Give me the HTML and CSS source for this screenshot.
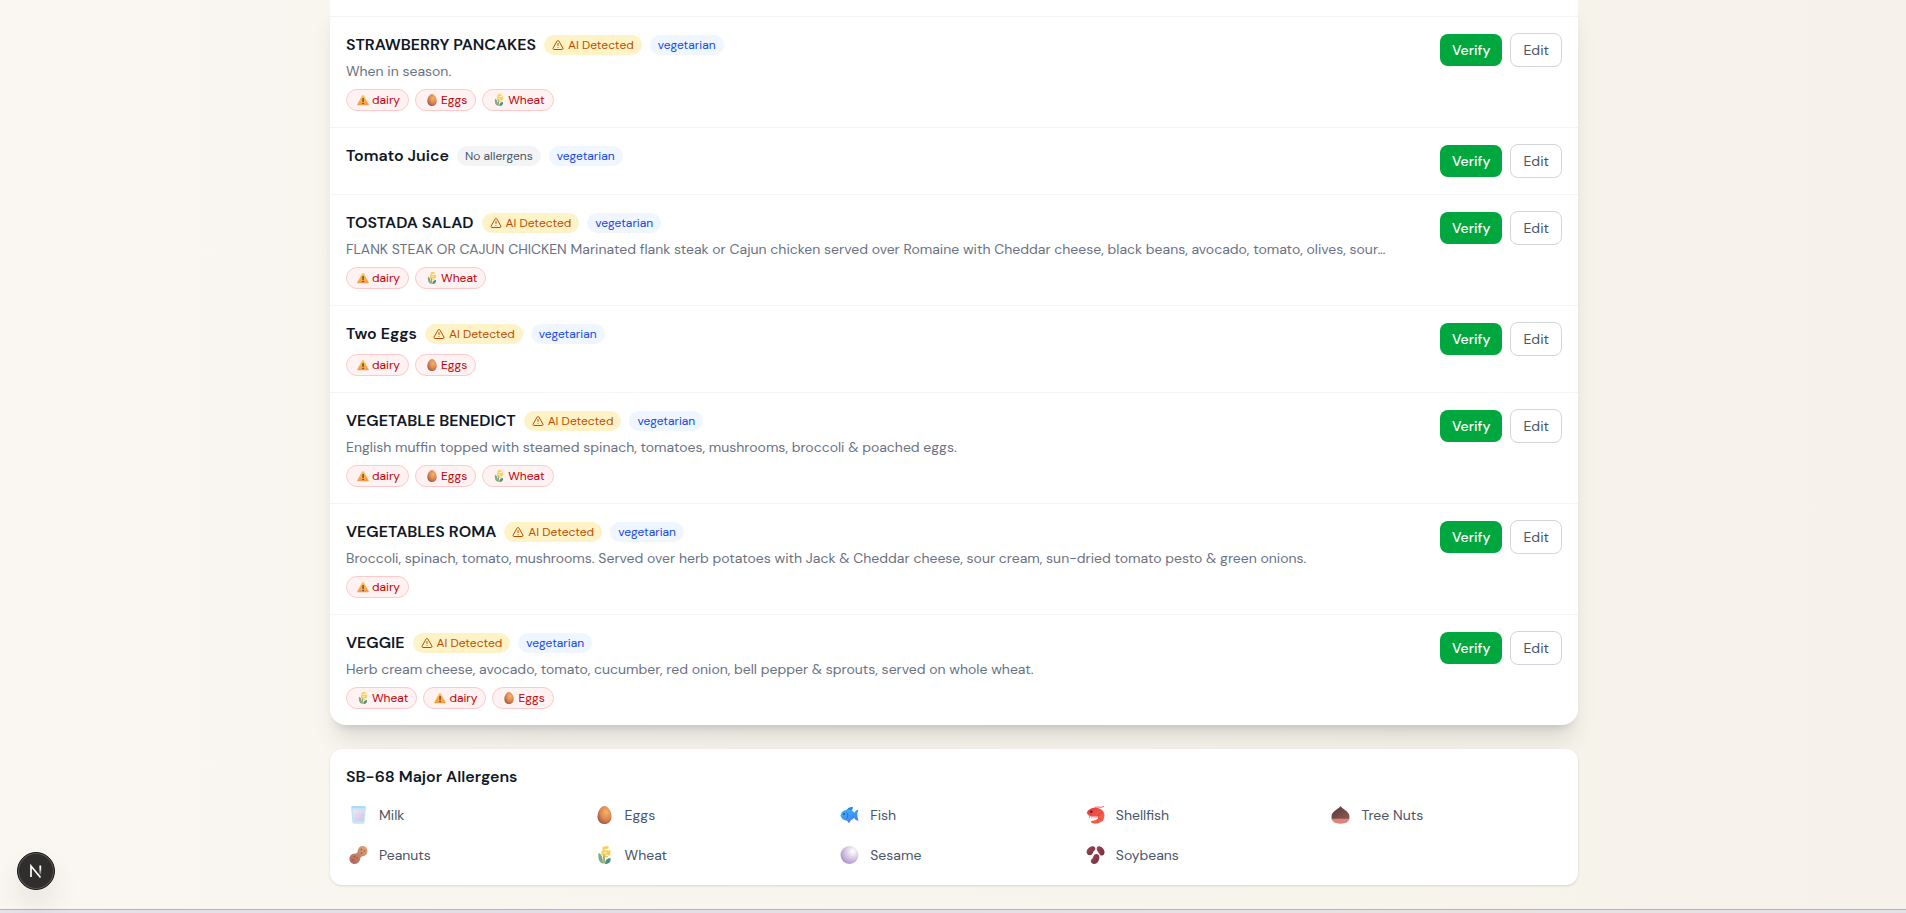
FILE: index.html
```html
<!DOCTYPE html>
<html lang="en">
<head>
<meta charset="utf-8">
<title>Menu Allergens</title>
<link rel="stylesheet" href="styles.css">
</head>
<body>
<svg class="sprite" aria-hidden="true">
  <defs>
    <linearGradient id="g-warn" x1="0" y1="0" x2="0" y2="1"><stop offset="0" stop-color="#ffc54f"/><stop offset="1" stop-color="#f59a4a"/></linearGradient>
    <radialGradient id="g-egg" cx=".62" cy=".35" r=".75"><stop offset="0" stop-color="#f6b26b"/><stop offset=".55" stop-color="#d9874e"/><stop offset="1" stop-color="#96504a"/></radialGradient>
    <linearGradient id="g-fish" x1="0" y1="0" x2="1" y2="1"><stop offset="0" stop-color="#3fb6f8"/><stop offset="1" stop-color="#3f7dfb"/></linearGradient>
    <linearGradient id="g-shrimp" x1="0" y1="0" x2="1" y2="1"><stop offset="0" stop-color="#e2383f"/><stop offset="1" stop-color="#ff7043"/></linearGradient>
    <linearGradient id="g-nut" x1="0" y1="0" x2="1" y2="1"><stop offset="0" stop-color="#54363a"/><stop offset="1" stop-color="#8f5a52"/></linearGradient>
    <linearGradient id="g-peanut" x1="1" y1="0" x2="0" y2="1"><stop offset="0" stop-color="#e0a878"/><stop offset="1" stop-color="#b0605c"/></linearGradient>
    <radialGradient id="g-pearl" cx=".68" cy=".3" r=".8"><stop offset="0" stop-color="#ffffff"/><stop offset=".45" stop-color="#dcd0e4"/><stop offset="1" stop-color="#a98bd0"/></radialGradient>
    <linearGradient id="g-bean" x1="0" y1="0" x2="1" y2="1"><stop offset="0" stop-color="#a5484e"/><stop offset="1" stop-color="#6b2c44"/></linearGradient>
    <linearGradient id="g-milk" x1="0" y1="0" x2="1" y2="1"><stop offset="0" stop-color="#f0e9f6"/><stop offset="1" stop-color="#cdc4df"/></linearGradient>
    <linearGradient id="g-mark" x1="0" y1="0" x2="0" y2="1"><stop offset=".3" stop-color="#fff"/><stop offset="1" stop-color="#fff" stop-opacity="0"/></linearGradient>
  </defs>
  <symbol id="alert" viewBox="0 0 24 24"><g fill="none" stroke="currentColor" stroke-width="2" stroke-linecap="round" stroke-linejoin="round"><path d="m21.73 18-8-14a2 2 0 0 0-3.48 0l-8 14A2 2 0 0 0 4 21h16a2 2 0 0 0 1.730-3"/><path d="M12 9v4M12 17h.01"/></g></symbol>
  <symbol id="dairy" viewBox="0 0 18 18"><path d="M7.600 2.300a1.600 1.600 0 0 1 2.800 0l6.900 12.600a1.400 1.400 0 0 1-1.200 2.100H1.900a1.400 1.400 0 0 1-1.200-2.100z" fill="url(#g-warn)"/><path d="M8 6.300h2.200l-.3 5.800H8.300z" fill="#4a3b3a"/><circle cx="9.100" cy="14.200" r="1.200" fill="#4a3b3a"/></symbol>
  <symbol id="eggs" viewBox="0 0 18 18"><path d="M9 0c3.800 0 7 5.800 7 10.400C16 15 13 18 9 18s-7-3-7-7.600C2 5.800 5.200 0 9 0z" fill="url(#g-egg)"/></symbol>
  <symbol id="wheat" viewBox="0 0 18 18"><path d="M8.500 17.500V8" stroke="#8a9b58" stroke-width="1.500"/><path d="M7 1.200c1.500-1 4-1.200 6-.9v2.400h-3v1.800h3.500v-.6h1.300v5.600h-2.200v2H9.500V9.300H6V5h1z" fill="#fbcb52"/><path d="M8.500 3.700h3M8 6.600h3.500M10 9.400h2.600" stroke="#fff3b8" stroke-width="1.200"/><path d="M3 7c2.800 1 4.200 3.800 4.500 10.500C4 17 2.200 13 3 7z" fill="#7dab82"/><path d="M15 12c.6 3.500-1 6-5.500 6 0-3.500 2-5.800 5.500-6z" fill="#4c8f7a"/></symbol>
  <symbol id="milk" viewBox="0 0 18 18"><path d="M1.500.3h15l-1.300 16a1.600 1.600 0 0 1-1.600 1.400H4.400a1.600 1.600 0 0 1-1.600-1.400z" fill="#bfe6fa"/><path d="M3.200 3.800h11.600l-1 11.200H4.400z" fill="url(#g-milk)"/><path d="M2.500 1h13" stroke="#94d4f6" stroke-width="1.200"/></symbol>
  <symbol id="fish" viewBox="0 0 18 18"><path d="M6 4.600C7 1.500 9.500.8 12.500 1l-1 3.800z" fill="#2487d8"/><path d="M0 9.500c1-4 4.200-6 7.800-6 3 0 4.700 1.500 6 3.300.8-1.500 1.900-3 4.200-3-.8 2.300-1.200 3.300-1.200 5s.6 3.500 1.200 6c-2.300 0-3.600-1.500-4.400-3-1.500 1.900-3.300 3-5.800 3C4 14.800.8 13 0 9.500z" fill="url(#g-fish)"/><path d="m6.500 14.500 2 2.500 1.800-2.700z" fill="#3569e8"/><path d="M6 6c1.700 2 1.700 5 0 7" fill="none" stroke="#2574cf" stroke-width="1"/><circle cx="3.500" cy="8" r=".9" fill="#244a88"/></symbol>
  <symbol id="shellfish" viewBox="0 0 18 18"><path d="M8 1.400C11 .3 15 2.300 17.500.4" fill="none" stroke="#ef5f78" stroke-width="1"/><path d="M.3 6.500C2 3 5.500 1.600 9 1.800c5.500.2 9 3.400 9 7.800 0 5-4 8.100-9 8.100-2.500 0-4-.6-4.800-1.900 1.600-2 4.300-1.200 6-2.100 1.300-.7 1.600-1.900.8-3.200H5.500C3 10.400 1 9 .3 6.500z" fill="url(#g-shrimp)"/><path d="M3 9.500v2.500M5.300 10v2.500M7.500 10v2.300M9.500 10v2" stroke="#f58a8a" stroke-width="1"/><path d="m11 10 5.500-4M11.500 12l5 2.500M10.500 13.500l1.500 3.500" stroke="#d9354a" stroke-width=".8"/><circle cx="4.700" cy="5.800" r="1.200" fill="#54242e"/></symbol>
  <symbol id="treenuts" viewBox="0 0 18 18"><path d="M0 12h18c0 3.500-3.500 5.700-9 5.700S0 15.500 0 12z" fill="#e0817a"/><path d="M9 0c1 2.500 9 5 9 10.500 0 .8-.1 1.500-.4 2.200H.4C.1 12 0 11.300 0 10.500 0 5 8 2.500 9 0z" fill="url(#g-nut)"/></symbol>
  <symbol id="peanuts" viewBox="0 0 18 18"><path d="M13 0c3 0 5 2 5 5 0 3.200-2.200 5-4.600 5.200-1.700.2-2.300.8-2.600 2.400-.5 3.300-2.500 5.400-5.500 5.400C2.200 18 0 15.800 0 13c0-3 2-5.300 5.200-5.400C7.200 7.500 7.900 7 8.200 5 8.600 2 10.300 0 13 0z" fill="url(#g-peanut)"/><g fill="#8f5548"><circle cx="12" cy="3.500" r=".8"/><circle cx="15" cy="5" r=".8"/><circle cx="12" cy="7" r=".8"/><circle cx="5" cy="10.500" r=".8"/><circle cx="7.500" cy="12" r=".8"/><circle cx="3.500" cy="14" r=".8"/></g></symbol>
  <symbol id="sesame" viewBox="0 0 18 18"><circle cx="9" cy="9" r="9" fill="url(#g-pearl)"/></symbol>
  <symbol id="soybeans" viewBox="0 0 18 18"><g fill="url(#g-bean)"><path d="M5.500.3c2.300-.5 3.600 1 3.300 2.800-.2 1.400-1.400 1.500-2 2.600-.8 1.500-1 3.300-3.300 3.500C1.500 9.300 0 7.800.1 5.800.3 3 3 .9 5.500.3z"/><path d="M12 .2c2.500-.3 5.200 2 5.900 5 .5 2.500-.6 4.300-2.400 4.400-1.600.1-2-1-2.800-2.200C11.800 6 10.300 4.700 10.200 2.700c0-1.300.6-2.300 1.800-2.500z"/><path d="M9.500 8c2.200-.3 3.500 1.300 3.300 3.800-.2 3.300-2.300 6.200-5 6.200-2 0-3.700-1.500-3.500-3.300.2-1.500 1.500-1.500 2-2.800.6-1.600.9-3.500 3.200-3.900z"/></g></symbol>
</svg>

<main class="page">
  <section class="menu" aria-label="Menu items">
    <article class="item item-partial"></article>

    <article class="item">
      <div class="info">
        <div class="head"><h3>STRAWBERRY PANCAKES</h3><span class="badge badge-ai"><svg><use href="#alert"/></svg>AI Detected</span><span class="badge badge-diet">vegetarian</span></div>
        <p class="desc">When in season.</p>
        <div class="chips"><span class="chip"><svg><use href="#dairy"/></svg>dairy</span><span class="chip"><svg><use href="#eggs"/></svg>Eggs</span><span class="chip"><svg><use href="#wheat"/></svg>Wheat</span></div>
      </div>
      <div class="actions"><button class="btn btn-verify">Verify</button><button class="btn btn-edit">Edit</button></div>
    </article>

    <article class="item">
      <div class="info">
        <div class="head"><h3>Tomato Juice</h3><span class="badge badge-none">No allergens</span><span class="badge badge-diet">vegetarian</span></div>
      </div>
      <div class="actions"><button class="btn btn-verify">Verify</button><button class="btn btn-edit">Edit</button></div>
    </article>

    <article class="item">
      <div class="info">
        <div class="head"><h3>TOSTADA SALAD</h3><span class="badge badge-ai"><svg><use href="#alert"/></svg>AI Detected</span><span class="badge badge-diet">vegetarian</span></div>
        <p class="desc">FLANK STEAK OR CAJUN CHICKEN Marinated flank steak or Cajun chicken served over Romaine with Cheddar cheese, black beans, avocado, tomato, olives, sour…</p>
        <div class="chips"><span class="chip"><svg><use href="#dairy"/></svg>dairy</span><span class="chip"><svg><use href="#wheat"/></svg>Wheat</span></div>
      </div>
      <div class="actions"><button class="btn btn-verify">Verify</button><button class="btn btn-edit">Edit</button></div>
    </article>

    <article class="item">
      <div class="info">
        <div class="head"><h3>Two Eggs</h3><span class="badge badge-ai"><svg><use href="#alert"/></svg>AI Detected</span><span class="badge badge-diet">vegetarian</span></div>
        <div class="chips"><span class="chip"><svg><use href="#dairy"/></svg>dairy</span><span class="chip"><svg><use href="#eggs"/></svg>Eggs</span></div>
      </div>
      <div class="actions"><button class="btn btn-verify">Verify</button><button class="btn btn-edit">Edit</button></div>
    </article>

    <article class="item">
      <div class="info">
        <div class="head"><h3>VEGETABLE BENEDICT</h3><span class="badge badge-ai"><svg><use href="#alert"/></svg>AI Detected</span><span class="badge badge-diet">vegetarian</span></div>
        <p class="desc">English muffin topped with steamed spinach, tomatoes, mushrooms, broccoli &amp; poached eggs.</p>
        <div class="chips"><span class="chip"><svg><use href="#dairy"/></svg>dairy</span><span class="chip"><svg><use href="#eggs"/></svg>Eggs</span><span class="chip"><svg><use href="#wheat"/></svg>Wheat</span></div>
      </div>
      <div class="actions"><button class="btn btn-verify">Verify</button><button class="btn btn-edit">Edit</button></div>
    </article>

    <article class="item">
      <div class="info">
        <div class="head"><h3>VEGETABLES ROMA</h3><span class="badge badge-ai"><svg><use href="#alert"/></svg>AI Detected</span><span class="badge badge-diet">vegetarian</span></div>
        <p class="desc">Broccoli, spinach, tomato, mushrooms. Served over herb potatoes with Jack &amp; Cheddar cheese, sour cream, sun-dried tomato pesto &amp; green onions.</p>
        <div class="chips"><span class="chip"><svg><use href="#dairy"/></svg>dairy</span></div>
      </div>
      <div class="actions"><button class="btn btn-verify">Verify</button><button class="btn btn-edit">Edit</button></div>
    </article>

    <article class="item">
      <div class="info">
        <div class="head"><h3>VEGGIE</h3><span class="badge badge-ai"><svg><use href="#alert"/></svg>AI Detected</span><span class="badge badge-diet">vegetarian</span></div>
        <p class="desc">Herb cream cheese, avocado, tomato, cucumber, red onion, bell pepper &amp; sprouts, served on whole wheat.</p>
        <div class="chips"><span class="chip"><svg><use href="#wheat"/></svg>Wheat</span><span class="chip"><svg><use href="#dairy"/></svg>dairy</span><span class="chip"><svg><use href="#eggs"/></svg>Eggs</span></div>
      </div>
      <div class="actions"><button class="btn btn-verify">Verify</button><button class="btn btn-edit">Edit</button></div>
    </article>
  </section>

  <section class="legend">
    <h2>SB-68 Major Allergens</h2>
    <ul>
      <li><svg><use href="#milk"/></svg>Milk</li>
      <li><svg><use href="#eggs"/></svg>Eggs</li>
      <li><svg><use href="#fish"/></svg>Fish</li>
      <li><svg><use href="#shellfish"/></svg>Shellfish</li>
      <li><svg><use href="#treenuts"/></svg>Tree Nuts</li>
      <li><svg><use href="#peanuts"/></svg>Peanuts</li>
      <li><svg><use href="#wheat"/></svg>Wheat</li>
      <li><svg><use href="#sesame"/></svg>Sesame</li>
      <li><svg><use href="#soybeans"/></svg>Soybeans</li>
    </ul>
  </section>
</main>
<footer class="bottom-bar"></footer>

<button class="dev-badge" aria-label="Open developer tools">
  <svg viewBox="0 0 16 16" fill="none"><path d="M3 14V3l9.500 11.500" stroke="#fff" stroke-width="1.700"/><path d="M11.400 2.500h1.800v10h-1.800z" fill="url(#g-mark)"/></svg>
</button>
</body>
</html>
```
FILE: styles.css
```css
* { box-sizing: border-box; }

body {
  margin: 0;
  min-height: 100vh;
  display: flex;
  flex-direction: column;
  overflow: hidden;
  font-family: "DM Sans", Inter, "Open Sans", sans-serif;
  font-size: 14px;
  line-height: 20px;
  color: #4a5565;
  background: linear-gradient(to right, #faf7f2, #f7f4ec 75%, #f6f1eb);
}

h2, h3, p, ul { margin: 0; padding: 0; }

.sprite { position: absolute; width: 0; height: 0; }

.page {
  width: 100%;
  max-width: 1280px;
  margin: 0 auto;
  padding: 0 15px 24px 17px;
  display: flex;
  flex-direction: column;
  gap: 24px;
}

.menu {
  background: #fff;
  border-radius: 0 0 16px 16px;
  box-shadow: 0 20px 25px -5px rgba(0, 0, 0, .1), 0 8px 10px -6px rgba(0, 0, 0, .14);
}

.item {
  display: flex;
  align-items: flex-start;
  justify-content: space-between;
  gap: 16px;
  padding: 16px;
  border-top: 1px solid #f3f4f6;
}

.item-partial { padding: 16px 0 0; border-top: 0; }

.info { flex: 1; min-width: 0; }

.head { display: flex; align-items: center; gap: 8px; }

h2, h3 {
  font-size: 16px;
  line-height: 24px;
  font-weight: 600;
  color: #101828;
}

.badge {
  display: inline-flex;
  align-items: center;
  gap: 4px;
  padding: 2px 8px;
  border-radius: 10px;
  font-size: 12px;
  line-height: 16px;
}

.badge svg { width: 12px; height: 12px; }
.badge-ai { color: #bb4d00; background: #fef3c6; }
.badge-diet { color: #1447e6; background: #eff6ff; }
.badge-none { color: #4a5565; background: #f3f4f6; }

.desc {
  margin-top: 4px;
  color: #6a7282;
  white-space: nowrap;
  overflow: hidden;
  text-overflow: ellipsis;
}

.chips { display: flex; flex-wrap: wrap; gap: 6px; margin-top: 8px; }

.chip {
  display: inline-flex;
  align-items: center;
  gap: 3px;
  padding: 2px 8px 2px 10px;
  border: 1px solid #ffc9c9;
  border-radius: 11px;
  background: #fef2f2;
  color: #c10007;
  font-size: 12px;
  line-height: 16px;
}

.chip svg { width: 12px; height: 12px; }

.actions { display: flex; align-items: center; gap: 8px; }

.btn {
  padding: 6px 12px;
  border: 0;
  border-radius: 8px;
  font: inherit;
  cursor: pointer;
}

.btn-verify { background: #00a63e; color: #fff; font-weight: 500; }
.btn-edit { background: #fff; color: #4a5565; border: 1px solid #d1d5dc; }

.legend {
  padding: 16px;
  background: #fff;
  border-radius: 12px;
  box-shadow: 0 1px 3px rgba(0, 0, 0, .1), 0 1px 2px -1px rgba(0, 0, 0, .1);
}

.legend ul {
  display: grid;
  grid-template-columns: repeat(5, 1fr);
  gap: 12px;
  margin-top: 12px;
  list-style: none;
}

.legend li { display: flex; align-items: center; gap: 8px; line-height: 28px; }
.legend svg { width: 25px; height: 18px; }

.bottom-bar {
  flex: 1;
  border-top: 1px solid #b4b4b8;
  background: linear-gradient(to right, #e4e3e8, #e0dfe9 30%, #e8e1e1 75%, #e2e2e6);
}

.dev-badge {
  position: fixed;
  left: 17px;
  bottom: 23px;
  width: 38px;
  height: 38px;
  display: grid;
  place-items: center;
  padding: 0;
  border: 1px solid #171717;
  border-radius: 50%;
  background: #2f2e2c;
  box-shadow: inset 0 0 0 1px #5c5b59, 0 16px 32px -8px rgba(0, 0, 0, .24);
}

.dev-badge svg { width: 16px; height: 16px; }
```
